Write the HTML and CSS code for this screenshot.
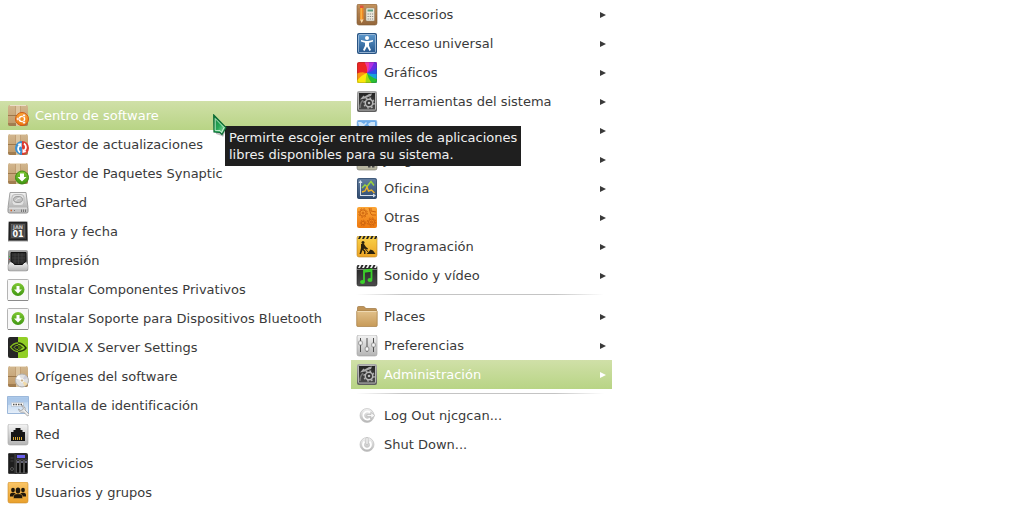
FILE: index.html
```html
<!DOCTYPE html>
<html lang="es">
<head>
    <meta charset="UTF-8">
    <meta name="viewport" content="width=device-width, initial-scale=1.0">
    <title>Menú del sistema</title>
    <link rel="stylesheet" href="styles.css">
</head>
<body>
    <!-- Degradados y formas compartidas por los iconos -->
    <svg class="defs" aria-hidden="true">
        <defs>
            <linearGradient id="gBox" x1="0" y1="0" x2="0" y2="1"><stop offset="0" stop-color="#d2b78f"/><stop offset="1" stop-color="#bd9766"/></linearGradient>
            <linearGradient id="gGrey" x1="0" y1="0" x2="0" y2="1"><stop offset="0" stop-color="#f4f4f4"/><stop offset="1" stop-color="#b4b4b4"/></linearGradient>
            <linearGradient id="gSteel" x1="0" y1="0" x2="0" y2="1"><stop offset="0" stop-color="#a8a8a8"/><stop offset="1" stop-color="#5c5c5c"/></linearGradient>
            <linearGradient id="gDark" x1="0" y1="0" x2="0" y2="1"><stop offset="0" stop-color="#222"/><stop offset="1" stop-color="#4c4c4c"/></linearGradient>
            <linearGradient id="gGreen" x1="0" y1="0" x2="0" y2="1"><stop offset="0" stop-color="#7fc832"/><stop offset="1" stop-color="#3f9612"/></linearGradient>
            <linearGradient id="gOrange" x1="0" y1="0" x2="0" y2="1"><stop offset="0" stop-color="#fba637"/><stop offset="1" stop-color="#ee780f"/></linearGradient>
            <linearGradient id="gYellow" x1="0" y1="0" x2="0" y2="1"><stop offset="0" stop-color="#f9d34a"/><stop offset="1" stop-color="#eda425"/></linearGradient>
            <linearGradient id="gAmber" x1="0" y1="0" x2="0" y2="1"><stop offset="0" stop-color="#fbc667"/><stop offset="1" stop-color="#e9a02c"/></linearGradient>
            <linearGradient id="gBlue" x1="0" y1="0" x2="0" y2="1"><stop offset="0" stop-color="#5b96ca"/><stop offset="1" stop-color="#28598f"/></linearGradient>
            <linearGradient id="gOffice" x1="0" y1="0" x2="0" y2="1"><stop offset="0" stop-color="#647f9f"/><stop offset="1" stop-color="#2f4a70"/></linearGradient>
            <linearGradient id="gWood" x1="0" y1="0" x2="0" y2="1"><stop offset="0" stop-color="#c4935e"/><stop offset="1" stop-color="#94663a"/></linearGradient>
            <linearGradient id="gFolder" x1="0" y1="0" x2="0" y2="1"><stop offset="0" stop-color="#e2c28c"/><stop offset="1" stop-color="#c79a58"/></linearGradient>
            <linearGradient id="gSky" x1="0" y1="0" x2="0" y2="1"><stop offset="0" stop-color="#a9c8ea"/><stop offset="1" stop-color="#e6eff9"/></linearGradient>
            <linearGradient id="gCursor" x1="0" y1="0" x2="1" y2="1"><stop offset="0" stop-color="#0d7a38"/><stop offset="0.5" stop-color="#27a857"/><stop offset="1" stop-color="#b6ecc0"/></linearGradient>
        </defs>

        <symbol id="box" viewBox="0 0 22 22">
            <rect x="1" y="0" width="20" height="21" rx="2" fill="url(#gBox)"/>
            <path d="M1 18v1a2 2 0 0 0 2 2h16a2 2 0 0 0 2-2v-1z" fill="#8d6a40" opacity=".6"/>
            <path d="M9 0h4v10H9zM9 11h4v10H9z" fill="#dcc5a0"/>
            <path d="M1 10.500h20" stroke="#9c784c"/>
            <path d="M8.500 0v10M13.500 0v10" stroke="#b8946a" stroke-width=".6"/>
            <path d="M3 .5h16" stroke="#ecdfca"/>
        </symbol>

        <symbol id="ubuntu" viewBox="0 0 22 22">
            <use href="#box" width="22" height="22"/>
            <circle cx="15" cy="14" r="6.500" fill="url(#gOrange)" stroke="#cf5a15"/>
            <circle cx="15" cy="14" r="2.600" fill="none" stroke="#fff" stroke-width="1.400"/>
            <g fill="#fff" stroke="#ee7b22" stroke-width=".5"><circle cx="10.900" cy="14" r="1.400"/><circle cx="17" cy="10.400" r="1.400"/><circle cx="17" cy="17.600" r="1.400"/></g>
        </symbol>

        <symbol id="update" viewBox="0 0 22 22">
            <use href="#box" width="22" height="22"/>
            <path d="M15 7a7 7 0 0 0 0 14z" fill="#3a8fd0"/>
            <path d="M15 7a7 7 0 0 1 0 14z" fill="#dc3a30"/>
            <path d="M13 18.500c-2.500-2-2.500-5-.5-7" fill="none" stroke="#fff" stroke-width="1.800"/>
            <path d="M10.500 10l4-1v4.500z" fill="#fff"/>
            <path d="M17 9.500c2.500 2 2.500 5 .5 7" fill="none" stroke="#fff" stroke-width="1.800"/>
            <path d="M19.500 18l-4 1v-4.500z" fill="#fff"/>
        </symbol>

        <symbol id="synaptic" viewBox="0 0 22 22">
            <use href="#box" width="22" height="22"/>
            <circle cx="15" cy="14.500" r="6.500" fill="url(#gGreen)" stroke="#3c8a12"/>
            <path d="M13 10.500h4v3.500h2.500L15 18.500 10.500 14H13z" fill="#fff"/>
        </symbol>

        <symbol id="disk" viewBox="0 0 22 22">
            <rect x="1" y="15" width="20" height="6" rx="1.500" fill="#c4c4c4" stroke="#929292"/>
            <path d="M3 .5h16l2 15H1z" fill="url(#gGrey)" stroke="#a2a2a2"/>
            <rect x="5" y="2.500" width="12" height="11" rx="3" fill="#e2e2e2" stroke="#bbb"/>
            <ellipse cx="11" cy="7.500" rx="4.500" ry="3" fill="#c2c2c2" stroke="#999"/>
            <path d="M8.500 9c1-2 3-3 5-3" stroke="#eee" fill="none"/>
            <path d="M2 16h18" stroke="#f2f2f2"/>
            <path d="M3.500 18.500H5" stroke="#d2622a" stroke-width="1.500"/>
            <path d="M7 18.500h1M14.500 17.500v2.500M16.500 17.500v2.500M18.500 17.500v2.500" stroke="#777"/>
        </symbol>

        <symbol id="printer" viewBox="0 0 22 22">
            <rect x="1" y="0" width="20" height="21" rx="2" fill="url(#gSteel)"/>
            <path d="M1 15l2-3h16l2 3v4a2 2 0 0 1-2 2H3a2 2 0 0 1-2-2z" fill="url(#gGrey)" stroke="#8c8c8c" stroke-width=".5"/>
            <path d="M4 2.500h15v9l-2.500 1.500-1 1.500h-8l-1-1.500L4 11.500z" fill="#2a2a2a" stroke="#111"/>
            <path d="M5 5h13M5 8h13M6 11h11M8 3v10M11.500 3v11M15 3v10" stroke="#484848" stroke-width=".6"/>
            <path d="M2 6.500h1" stroke="#4b4"/><path d="M2 9.500h1" stroke="#d33"/>
        </symbol>

        <symbol id="install" viewBox="0 0 22 22">
            <rect x=".5" y=".5" width="21" height="21" rx="1" fill="#f8f8f8" stroke="#b4b4b4"/>
            <path d="M1 21.500h20" stroke="#8c8c8c"/>
            <circle cx="11" cy="10.500" r="6.500" fill="url(#gGreen)"/>
            <path d="M9.500 7h3v3.500H15l-4 4-4-4h2.500z" fill="#fff"/>
        </symbol>

        <symbol id="nvidia" viewBox="0 0 22 22">
            <path d="M3 0h8v21H3a2 2 0 0 1-2-2V2a2 2 0 0 1 2-2z" fill="#262626"/>
            <path d="M11 0h8a2 2 0 0 1 2 2v17a2 2 0 0 1-2 2h-8z" fill="#92cf26"/>
            <path d="M11 6c-3 0-5.500 1.500-7.500 4 2 3 4.500 4.500 7.500 4.500" fill="none" stroke="#84bc1c" stroke-width="1.300"/>
            <path d="M11 6c4 0 6 2 8 5-2 2.500-5 3.500-8 3.500" fill="none" stroke="#26370a" stroke-width="1.500"/>
            <path d="M11 8.300c-2 0-3.200 1-4 2 .8 1.300 2 2.200 4 2.200" fill="none" stroke="#84bc1c"/>
            <path d="M11 8.300c2 0 3 1 4 2.200-1 1.300-2 2-4 2" fill="#4d7310" stroke="#26370a"/>
        </symbol>

        <symbol id="sources" viewBox="0 0 22 22">
            <use href="#box" width="22" height="22"/>
            <circle cx="15" cy="14.500" r="6.500" fill="#e0e0e0" stroke="#b0b0b0"/>
            <path d="M15 14.500l-6-2a6 6 0 0 1 3-3.500z" fill="#fff"/>
            <path d="M15 14.500l5.500 3a6 6 0 0 1-3 2.700z" fill="#f2dba8"/>
            <path d="M15 14.500l3-5.300a6 6 0 0 1 2.500 2.800z" fill="#ccccd8"/>
            <circle cx="15" cy="14.500" r="1.700" fill="#c9b08a" stroke="#fff"/>
        </symbol>

        <symbol id="login" viewBox="0 0 22 22">
            <path d="M.5 1.500h21v17H.5z" fill="url(#gSky)" stroke="#9cb8da"/>
            <path d="M1 3h20v4c-7 0-12 3-20 3z" fill="#a3c2e6" opacity=".6"/>
            <rect x="4.500" y="7.500" width="12" height="4" fill="#f5f5f5" stroke="#c0cddc"/>
            <path d="M6 9.500h9" stroke="#555" stroke-width="1.500" stroke-dasharray="1.500 1"/>
            <path d="M11.500 14a3.500 3.500 0 0 0 5 3l4 4 2-1.500-4.500-4.500a3.500 3.500 0 0 0-3.500-4.500l2 2.500-1 2-2 .5z" fill="#ededed" stroke="#8c8c8c" stroke-width=".7"/>
        </symbol>

        <symbol id="network" viewBox="0 0 22 22">
            <rect x="1" y="0" width="20" height="21" rx="2" fill="url(#gGrey)" stroke="#a4a4a4" stroke-width=".6"/>
            <path d="M4 17V8h2.500V6h2V4h5v2h2v2H18v9z" fill="#161616"/>
            <path d="M6.500 16v-3M8.500 16v-3M10.500 16v-3M12.500 16v-3M14.500 16v-3" stroke="#d9a933"/>
        </symbol>

        <symbol id="services" viewBox="0 0 22 22">
            <rect x="1" y="0" width="20" height="21" rx="2" fill="#2b2b2b"/>
            <rect x="1.500" y=".5" width="6.500" height="20" rx="1" fill="#1d1d1d" stroke="#444"/>
            <circle cx="5" cy="16" r="1.500" fill="none" stroke="#555"/><path d="M3.500 5h3M3.500 8h3" stroke="#444"/>
            <rect x="10" y="2" width="8" height="3" fill="#6a60ee"/>
            <path d="M9.500 7h3v13h-3zM13.500 7h3v13h-3zM17.500 7h3v13h-3z" fill="#0c0c0c" stroke="#777" stroke-width=".6"/>
            <path d="M11 8v2M15 8v2M19 8v2" stroke="#bcbce4"/>
        </symbol>

        <symbol id="users" viewBox="0 0 22 22">
            <rect x="1" y="0" width="20" height="21" rx="2" fill="url(#gAmber)" stroke="#c98a2a" stroke-width=".6"/>
            <g fill="#20180c">
                <ellipse cx="6" cy="8" rx="1.900" ry="2.300"/><path d="M3 14.500v-2c0-2.500 6-2.500 6 0v2z"/>
                <ellipse cx="16" cy="8" rx="1.900" ry="2.300"/><path d="M13 14.500v-2c0-2.500 6-2.500 6 0v2z"/>
                <path d="M6.500 16.500v-2.500c0-3 9-3 9 0v2.500z" stroke="#eeb040" stroke-width=".5"/><ellipse cx="11" cy="8.500" rx="2.300" ry="3"/>
            </g>
        </symbol>

        <symbol id="accessories" viewBox="0 0 22 22">
            <rect x="1" y="0" width="20" height="21" rx="2" fill="url(#gWood)" stroke="#7d5730" stroke-width=".6"/>
            <path d="M2 5h18M2 10h18M2 15h18" stroke="#a97a48" stroke-width=".6"/>
            <path d="M4 4h3.500v11.500L5.700 19 4 15.500z" fill="#f08a24"/>
            <path d="M5.200 4v11" stroke="#fbc14c"/><path d="M4 4V1.500h3.500V4z" fill="#e0543c"/><path d="M4 15.500h3.500L5.700 19z" fill="#f3dcb2"/>
            <rect x="10" y="4" width="8.500" height="13" rx="1" fill="#ece9dc" stroke="#8f8470" stroke-width=".5"/>
            <path d="M11.500 6.500h5.500" stroke="#5f9d80" stroke-width="2"/>
            <path d="M11.500 10h6M11.500 12.500h6M11.500 15h6" stroke="#8a8a8a" stroke-width="1.200" stroke-dasharray="1.300 .9"/>
        </symbol>

        <symbol id="access" viewBox="0 0 22 22">
            <rect x="1" y="0" width="20" height="21" rx="2" fill="#285484"/>
            <rect x="2.500" y="1.500" width="17" height="18" rx="1" fill="url(#gBlue)" stroke="#bcd4ec" stroke-width=".7"/>
            <circle cx="11" cy="5" r="2" fill="#fff"/>
            <path d="M5 7l4.500 1h3L17 7v1.500l-4 1.300v3L15 17l-1.500 1-2.500-4.500L8.500 18 7 17l2-4.200v-3L5 8.500z" fill="#fff"/>
        </symbol>

        <symbol id="graphics" viewBox="0 0 22 22">
            <clipPath id="tile"><rect x="1" y="0" width="20" height="21" rx="2"/></clipPath>
            <!-- cada sector tapa el borde del anterior -->
            <g clip-path="url(#tile)">
                <rect width="22" height="22" fill="#ed2624"/>
                <path d="M11 11Q12 4 6-4H24V11z" fill="#f0399d"/>
                <path d="M11 11Q14 5 13-4H26V11z" fill="#b32fe0"/>
                <path d="M11 11Q16 7 19-2H26V11z" fill="#6a2de2"/>
                <path d="M11 11Q17 10 24 3V24H11z" fill="#2b50e8"/>
                <path d="M11 11Q17 13 24 11V24H11z" fill="#19a0dc"/>
                <path d="M11 11Q15 16 24 18V26H9z" fill="#2abf32"/>
                <path d="M11 11Q12 17 18 24H-2V11z" fill="#a2d911"/>
                <path d="M11 11Q9 17 10 24H-2V11z" fill="#fbe70c"/>
                <path d="M11 11Q5 13 0 20H-2V8z" fill="#fb9512"/>
                <path d="M11 11Q5 9-2 13V-2z" fill="#ed2624"/>
            </g>
            <rect x="1.500" y=".5" width="19" height="20" rx="2" fill="none" stroke="#333" opacity=".2"/>
        </symbol>

        <symbol id="tools" viewBox="0 0 22 22">
            <rect x="1" y="0" width="20" height="21" rx="2" fill="url(#gSteel)"/>
            <rect x="2.500" y="1.500" width="17" height="17.500" rx="1" fill="url(#gDark)" stroke="#ccc" stroke-width=".8"/>
            <circle cx="13" cy="12" r="3.700" fill="#333" stroke="#b8b8b8" stroke-width="1.500"/>
            <circle cx="13" cy="12" r="5" fill="none" stroke="#b0b0b0" stroke-width="1.500" stroke-dasharray="1.800 2.100"/>
            <circle cx="13" cy="12" r="1.300" fill="#bbb"/>
            <path d="M4 8.500l3.500-4 1 1L13 3l3-.5-1 2.500-3 1-3 1.500z" fill="#aaa"/>
            <path d="M4 17c0-3 1-6 3-8" fill="none" stroke="#777" stroke-width="1.500"/>
        </symbol>

        <symbol id="internet" viewBox="0 0 22 22">
            <rect x="1" y="0" width="20" height="21" rx="2" fill="#6cabea" stroke="#a8c8e8" stroke-width=".6"/>
            <path d="M2 2l3 0 3 2 2-2 1 1-3 3-1 3-4-3zM12 4l3-2 4 0v7l-3-3-2 1z" fill="#cfe4f7"/>
            <path d="M5 11l4 1-2 7zM13 10l5 1-3 7z" fill="#cfe4f7"/>
        </symbol>

        <symbol id="games" viewBox="0 0 22 22">
            <rect x="1" y="0" width="20" height="21" rx="2" fill="#b7b5a0" stroke="#77756a" stroke-width=".6"/>
            <path d="M5 4h12v9H5z" fill="#55584a"/>
            <path d="M12 17.500h2.500M16 17.500h2.500" stroke="#444" stroke-width="2"/>
        </symbol>

        <symbol id="office" viewBox="0 0 22 22">
            <rect x="1" y="0" width="20" height="21" rx="2" fill="url(#gOffice)"/>
            <rect x="1.500" y=".5" width="19" height="20" rx="2" fill="none" stroke="#2d4464" opacity=".6"/>
            <path d="M4 17.500h14M4.500 18V4" stroke="#d7e0ea"/>
            <path d="M2.500 5l2-3 2 3zM17 15.500l3 2-3 2z" fill="#d7e0ea"/>
            <path d="M6 10l3-3 2 1.500 4-5 3 4" fill="none" stroke="#9bd53c" stroke-width="1.400"/>
            <path d="M6 14l3-1 2-4 1.500 4 3-1 3 3" fill="none" stroke="#eeb226" stroke-width="1.400"/>
        </symbol>

        <symbol id="other" viewBox="0 0 22 22">
            <rect x="1" y="0" width="20" height="21" rx="2" fill="url(#gOrange)"/>
            <g fill="none" stroke="#cc620e">
                <circle cx="7" cy="6" r="3.200"/><circle cx="7" cy="6" r="4.300" stroke-dasharray="1.700 1.700"/><circle cx="7" cy="6" r="1"/>
                <circle cx="15.500" cy="15" r="3"/><circle cx="15.500" cy="15" r="4.200" stroke-dasharray="1.700 1.600"/><circle cx="15.500" cy="15" r="1"/>
                <circle cx="7" cy="16" r="1.800"/><circle cx="7" cy="16" r="2.800" stroke-dasharray="1.300 1.300"/>
                <path d="M13 1c1 2 1 6 3 7h4M15 1v3l5 1"/>
            </g>
        </symbol>

        <symbol id="coding" viewBox="0 0 22 22">
            <rect x="1" y="0" width="20" height="21" rx="2" fill="url(#gYellow)" stroke="#b98426" stroke-width=".6"/>
            <path d="M2 3l1.500-3h2L4 3zM6 3l1.500-3h2L8 3zM10 3l1.500-3h2L12 3zM14 3l1.500-3h2L16 3zM18 3l1.500-3h1.500v1l-1 2z" fill="#222"/>
            <circle cx="7" cy="6.500" r="1.500" fill="#2a220d"/>
            <path d="M5 8h3l2 3 2 1.500-.5 1-3-1-1 .5 2 2v3H8v-2.500L6.500 14 5 18H3.500L5 12z" fill="#2a220d"/>
            <path d="M6 9l6 7" stroke="#2a220d"/>
            <path d="M10.500 18l2-2 2-2.500 2.500 1 2.500 3.500z" fill="#2a220d"/>
        </symbol>

        <symbol id="media" viewBox="0 0 22 22">
            <rect x="1" y="0" width="20" height="21" rx="2" fill="url(#gDark)" stroke="#222" stroke-width=".6"/>
            <path d="M2 3l1.500-3h2L4 3zM6 3l1.500-3h2L8 3zM10 3l1.500-3h2L12 3zM14 3l1.500-3h2L16 3zM18 3l1.500-3h1.500v1l-1 2z" fill="#f0f0f0"/>
            <path d="M1 4.500h20" stroke="#777"/>
            <path d="M8 17V5.500l7.500-1V14" fill="none" stroke="#3bd02b" stroke-width="1.800"/>
            <path d="M8 7l7.500-1" stroke="#3bd02b" stroke-width="1.600"/>
            <ellipse cx="6.500" cy="17" rx="2.500" ry="2" fill="#3bd02b"/><ellipse cx="14" cy="15" rx="2.500" ry="2" fill="#3bd02b"/>
        </symbol>

        <symbol id="folder" viewBox="0 0 22 22">
            <path d="M1.500 3V1.500q0-1 1-1h5q1 0 1.500 1l.5 1h10q1 0 1 1V8h-19z" fill="#c09457" stroke="#9d7540" stroke-width=".7"/>
            <rect x=".7" y="4.500" width="20.500" height="16" rx="1" fill="url(#gFolder)" stroke="#a57c44" stroke-width=".7"/>
            <path d="M1.500 5.500h19" stroke="#efd9b2"/>
        </symbol>

        <symbol id="prefs" viewBox="0 0 22 22">
            <rect x="1" y="0" width="20" height="21" rx="2" fill="url(#gGrey)" stroke="#a0a0a0" stroke-width=".6"/>
            <path d="M4.500 3v14M11 3v14M17.500 3v14" stroke="#4f4f4f"/>
            <g fill="#f4f4f4" stroke="#777" stroke-width=".7">
                <rect x="2.700" y="6" width="3.600" height="4" rx="1"/><rect x="9.200" y="12" width="3.600" height="4" rx="1"/><rect x="15.700" y="8" width="3.600" height="4" rx="1"/>
            </g>
        </symbol>

        <symbol id="logout" viewBox="0 0 22 22">
            <circle cx="11" cy="10.500" r="7" fill="url(#gGrey)" stroke="#c2c2c2" stroke-width=".7"/>
            <path d="M14 7.500a4 4 0 1 0 0 6" fill="none" stroke="#fff" stroke-width="1.800"/>
            <path d="M11 9.500h4V7.500l4 3-4 3v-2h-4z" fill="#f7f7f7" stroke="#b4b4b4" stroke-width=".6"/>
        </symbol>

        <symbol id="power" viewBox="0 0 22 22">
            <circle cx="11" cy="10.500" r="7" fill="url(#gGrey)" stroke="#c2c2c2" stroke-width=".7"/>
            <path d="M8.500 7.500a4 4 0 1 0 5 0" fill="none" stroke="#fff" stroke-width="1.800"/>
            <rect x="10" y="3.500" width="2" height="7" rx="1" fill="#fff" stroke="#aaa" stroke-width=".6"/>
        </symbol>
    </svg>

    <div class="desktop">
        <!-- Submenú de Administración -->
        <ul class="menu submenu">
            <li class="active">
                <button type="button" aria-describedby="tip"><svg class="icon"><use href="#ubuntu"/></svg><span class="label">Centro de software</span></button>
                <svg class="cursor" viewBox="0 0 16 24" aria-hidden="true">
                    <path d="M2 3L14 14 10 23 9 22 3 20z" fill="#000" opacity=".25"/>
                    <path d="M.7 1L13 13.500 9 20.500 7 18.500 1 18z" fill="url(#gCursor)" stroke="#0d6b35" stroke-width="1.200"/>
                    <path d="M2.200 4.500L11 13.500 8.500 18.500 7 16.500 2.200 16.500z" fill="none" stroke="#d8f5dc" stroke-width=".8"/>
                </svg>
                <div class="tooltip" id="tip" role="tooltip">Permirte escojer entre miles de aplicaciones<br>libres disponibles para su sistema.</div>
            </li>
            <li><button type="button"><svg class="icon"><use href="#update"/></svg><span class="label">Gestor de actualizaciones</span></button></li>
            <li><button type="button"><svg class="icon"><use href="#synaptic"/></svg><span class="label">Gestor de Paquetes Synaptic</span></button></li>
            <li><button type="button"><svg class="icon"><use href="#disk"/></svg><span class="label">GParted</span></button></li>
            <li>
                <button type="button">
                    <svg class="icon" viewBox="0 0 22 22" aria-hidden="true">
                        <rect x="1" y="0" width="20" height="21" rx="2" fill="url(#gSteel)"/>
                        <path d="M2 20.500h18" stroke="#d0d0d0"/>
                        <rect x="2.500" y="1.500" width="17" height="17" fill="#343434" stroke="#202020"/>
                        <rect x="4.500" y="3.500" width="13" height="13" fill="#4a4a4a" stroke="#777" stroke-width=".5"/>
                        <text x="11" y="8" class="month">JAN</text>
                        <text x="11" y="16" class="day">01</text>
                    </svg>
                    <span class="label">Hora y fecha</span>
                </button>
            </li>
            <li><button type="button"><svg class="icon"><use href="#printer"/></svg><span class="label">Impresión</span></button></li>
            <li><button type="button"><svg class="icon"><use href="#install"/></svg><span class="label">Instalar Componentes Privativos</span></button></li>
            <li><button type="button"><svg class="icon"><use href="#install"/></svg><span class="label">Instalar Soporte para Dispositivos Bluetooth</span></button></li>
            <li><button type="button"><svg class="icon"><use href="#nvidia"/></svg><span class="label">NVIDIA X Server Settings</span></button></li>
            <li><button type="button"><svg class="icon"><use href="#sources"/></svg><span class="label">Orígenes del software</span></button></li>
            <li><button type="button"><svg class="icon"><use href="#login"/></svg><span class="label">Pantalla de identificación</span></button></li>
            <li><button type="button"><svg class="icon"><use href="#network"/></svg><span class="label">Red</span></button></li>
            <li><button type="button"><svg class="icon"><use href="#services"/></svg><span class="label">Servicios</span></button></li>
            <li><button type="button"><svg class="icon"><use href="#users"/></svg><span class="label">Usuarios y grupos</span></button></li>
        </ul>

        <!-- Menú principal -->
        <ul class="menu mainmenu">
            <li><button type="button"><svg class="icon"><use href="#accessories"/></svg><span class="label">Accesorios</span><span class="arrow"></span></button></li>
            <li><button type="button"><svg class="icon"><use href="#access"/></svg><span class="label">Acceso universal</span><span class="arrow"></span></button></li>
            <li><button type="button"><svg class="icon"><use href="#graphics"/></svg><span class="label">Gráficos</span><span class="arrow"></span></button></li>
            <li><button type="button"><svg class="icon"><use href="#tools"/></svg><span class="label">Herramientas del sistema</span><span class="arrow"></span></button></li>
            <li><button type="button"><svg class="icon"><use href="#internet"/></svg><span class="label">Internet</span><span class="arrow"></span></button></li>
            <li><button type="button"><svg class="icon"><use href="#games"/></svg><span class="label">Juegos</span><span class="arrow"></span></button></li>
            <li><button type="button"><svg class="icon"><use href="#office"/></svg><span class="label">Oficina</span><span class="arrow"></span></button></li>
            <li><button type="button"><svg class="icon"><use href="#other"/></svg><span class="label">Otras</span><span class="arrow"></span></button></li>
            <li><button type="button"><svg class="icon"><use href="#coding"/></svg><span class="label">Programación</span><span class="arrow"></span></button></li>
            <li><button type="button"><svg class="icon"><use href="#media"/></svg><span class="label">Sonido y vídeo</span><span class="arrow"></span></button></li>
            <li class="separator" role="separator"></li>
            <li><button type="button"><svg class="icon"><use href="#folder"/></svg><span class="label">Places</span><span class="arrow"></span></button></li>
            <li><button type="button"><svg class="icon"><use href="#prefs"/></svg><span class="label">Preferencias</span><span class="arrow"></span></button></li>
            <li class="active"><button type="button"><svg class="icon"><use href="#tools"/></svg><span class="label">Administración</span><span class="arrow"></span></button></li>
            <li class="separator" role="separator"></li>
            <li><button type="button"><svg class="icon"><use href="#logout"/></svg><span class="label">Log Out njcgcan...</span></button></li>
            <li><button type="button"><svg class="icon"><use href="#power"/></svg><span class="label">Shut Down...</span></button></li>
        </ul>
    </div>
</body>
</html>
```
FILE: styles.css
```css
body {
    margin: 0;
    background-color: #fff;
    font-family: "DejaVu Sans", sans-serif;
    font-size: 13px;
    color: #3a3a3a;
}
.defs {
    position: absolute;
    width: 0;
    height: 0;
}
.desktop {
    display: flex;
    align-items: flex-start;
}
.menu {
    list-style: none;
    margin: 0;
    padding: 0;
}
.submenu {
    min-width: 351px;
    margin-top: 101px;
}
.mainmenu {
    min-width: 261px;
}
.menu li {
    position: relative;
}
.menu button {
    display: flex;
    align-items: center;
    gap: 6px;
    width: 100%;
    padding: 4px 6px 3px 5px;
    border: 0;
    background: none;
    color: inherit;
    font: inherit;
    line-height: 22px;
    text-align: left;
    white-space: nowrap;
}
.submenu button {
    padding-left: 7px;
}
.menu .active {
    background: linear-gradient(#d0e0a8, #b8d485);
    color: #fff;
}
.icon {
    width: 22px;
    height: 22px;
    flex: none;
}
.label {
    flex: 1;
}
.arrow {
    border-left: 6px solid;
    border-top: 3px solid transparent;
    border-bottom: 3px solid transparent;
}
.separator {
    height: 1px;
    padding: 4px 0 7px;
    background: linear-gradient(to right, transparent 2%, #c4c4c4 20%, #c4c4c4 78%, transparent 97%) content-box;
}
.cursor {
    position: absolute;
    left: 213px;
    top: 13px;
    z-index: 3;
    width: 16px;
    height: 24px;
}
.tooltip {
    position: absolute;
    left: 225px;
    top: 25px;
    z-index: 2;
    padding: 3px 4px;
    background-color: #1f1f1f;
    color: #f0f0f0;
    line-height: 17px;
    white-space: nowrap;
}
.month {
    font-size: 5px;
    font-weight: bold;
    text-anchor: middle;
    fill: #ccc;
}
.day {
    font-size: 8px;
    font-weight: bold;
    text-anchor: middle;
    fill: #fff;
}
```
